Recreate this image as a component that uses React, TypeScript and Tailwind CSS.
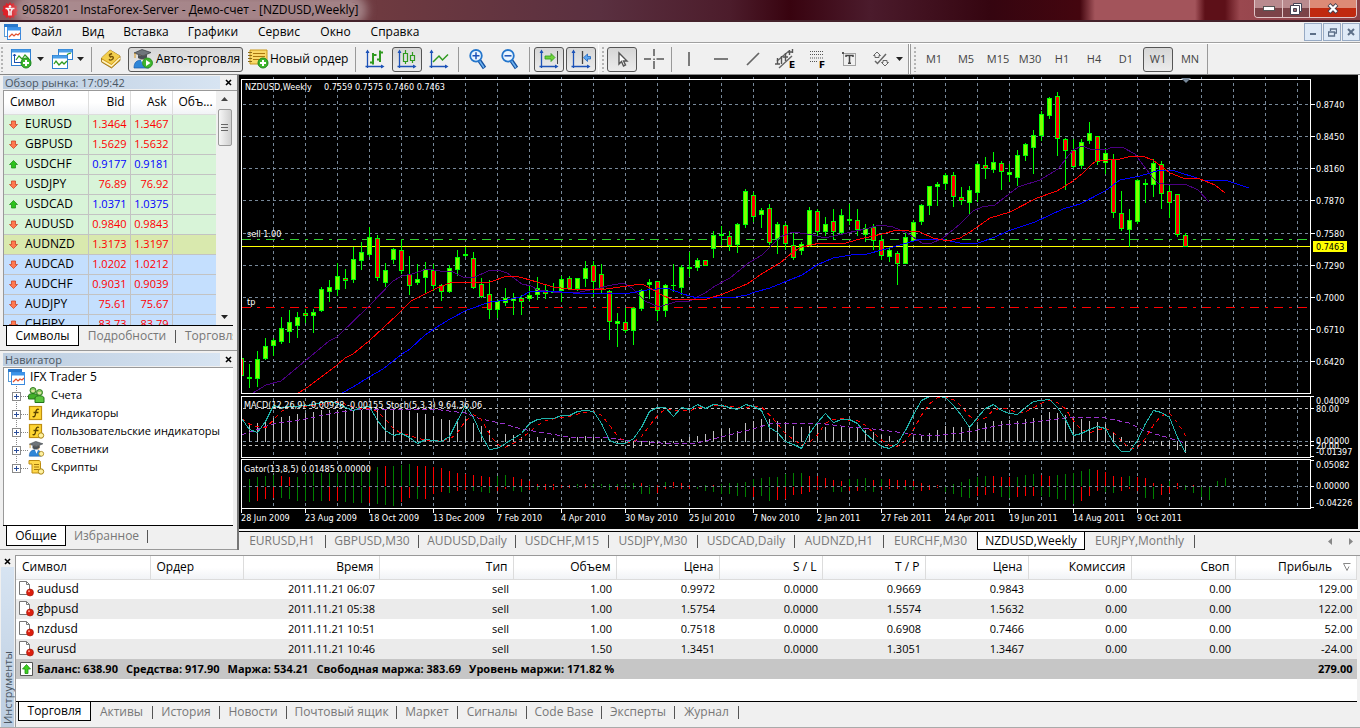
import type { ReactNode } from 'react';

/* ---------- chart data ---------- */

// [high, open/close top, open/close bottom, low, rising]
type Candle = [number, number, number, number, 0 | 1];

const CANDLES: Candle[] = [
  [358, 358, 376, 376, 0], [364, 377, 379, 388, 1], [351, 359, 379, 387, 1], [338, 346, 359, 360, 1], [338, 340, 346, 356, 1],
  [317, 328, 342, 344, 1], [310, 322, 332, 343, 1], [312, 317, 326, 338, 1], [309, 313, 316, 323, 0], [309, 312, 316, 333, 1],
  [287, 289, 311, 312, 1], [280, 287, 292, 302, 1], [263, 276, 290, 296, 1], [269, 278, 281, 289, 0], [247, 259, 280, 283, 1],
  [242, 252, 261, 270, 1], [227, 237, 255, 257, 1], [235, 238, 278, 281, 0], [263, 270, 283, 287, 1], [248, 249, 260, 264, 1],
  [240, 250, 271, 274, 0], [256, 274, 286, 295, 0], [264, 279, 283, 285, 1], [262, 269, 278, 293, 1], [264, 270, 286, 291, 0],
  [284, 285, 292, 301, 0], [265, 268, 292, 293, 1], [250, 257, 270, 276, 1], [247, 254, 256, 257, 1], [252, 258, 288, 289, 0],
  [278, 284, 297, 298, 0], [280, 294, 310, 319, 0], [300, 301, 310, 318, 1], [288, 298, 303, 306, 1], [293, 298, 301, 315, 1],
  [295, 298, 302, 315, 0], [286, 295, 299, 301, 1], [277, 288, 295, 300, 1], [285, 290, 294, 299, 0], [283, 291, 293, 293, 1],
  [276, 279, 291, 302, 1], [276, 278, 289, 290, 0], [278, 278, 289, 291, 1], [261, 268, 279, 287, 1], [261, 265, 282, 297, 0],
  [264, 274, 290, 293, 0], [290, 291, 322, 340, 0], [313, 321, 324, 347, 1], [308, 322, 331, 333, 0], [307, 308, 331, 345, 1],
  [289, 290, 309, 311, 1], [279, 282, 285, 299, 1], [281, 281, 311, 321, 0], [284, 285, 311, 317, 1], [264, 285, 286, 292, 1],
  [265, 267, 288, 295, 1], [252, 267, 269, 277, 1], [258, 260, 268, 271, 1], [260, 260, 266, 266, 0], [231, 235, 249, 258, 1],
  [226, 234, 236, 245, 1], [231, 236, 246, 251, 0], [223, 224, 245, 253, 1], [189, 191, 225, 228, 1], [192, 195, 217, 222, 0],
  [208, 210, 215, 228, 1], [204, 208, 243, 245, 0], [222, 224, 239, 254, 1], [223, 225, 244, 250, 0], [232, 245, 258, 260, 0],
  [242, 244, 251, 255, 1], [207, 210, 246, 247, 1], [209, 211, 232, 236, 0], [217, 224, 232, 236, 1], [209, 221, 232, 240, 0],
  [209, 215, 233, 235, 1], [204, 219, 221, 225, 1], [209, 220, 230, 236, 0], [224, 228, 235, 242, 1], [224, 227, 241, 250, 0],
  [235, 240, 256, 260, 0], [248, 250, 257, 262, 1], [251, 253, 264, 285, 0], [233, 237, 264, 264, 1], [220, 222, 241, 242, 1],
  [204, 205, 222, 225, 1], [186, 186, 206, 215, 1], [182, 184, 187, 206, 1], [173, 175, 184, 190, 1], [172, 175, 197, 207, 0],
  [187, 197, 201, 205, 0], [186, 190, 203, 214, 1], [163, 164, 193, 202, 1], [157, 165, 169, 179, 0], [152, 162, 170, 173, 1],
  [161, 163, 172, 190, 0], [164, 172, 175, 182, 1], [150, 155, 178, 186, 1], [143, 144, 156, 161, 1], [130, 135, 148, 174, 1],
  [111, 114, 136, 141, 1], [97, 98, 116, 119, 1], [92, 96, 139, 156, 0], [138, 139, 151, 190, 0], [139, 150, 167, 168, 0],
  [139, 142, 166, 169, 1], [122, 133, 141, 144, 1], [136, 136, 162, 165, 0], [148, 153, 163, 174, 1], [154, 159, 213, 218, 0],
  [191, 213, 229, 231, 0], [209, 220, 230, 247, 1], [179, 180, 222, 224, 1], [179, 183, 185, 203, 1], [159, 163, 185, 197, 1],
  [161, 164, 194, 209, 0], [186, 191, 203, 218, 0], [194, 194, 235, 237, 0], [233, 235, 247, 247, 0],
];

const MA_FAST =
  '253,393 266,385 281,381 305,361 329,341 337,337 369,306 393,281 402,276 412,274 427,269 440,271 453,272 463,277 475,277 488,271 498,270 507,273 522,284 531,286 538,290 553,292 580,292 600,288 607,286 623,283 632,288 645,301 659,307 675,302 690,301 705,293 715,286 730,278 747,264 762,255 780,237 793,232 800,233 813,235 825,238 847,233 865,229 880,225 893,227 907,233 922,243 930,244 943,238 960,224 973,211 982,207 995,205 1018,187 1040,180 1058,169 1073,150 1082,146 1090,149 1105,150 1113,147 1122,147 1135,154 1153,178 1158,183 1170,185 1185,184 1198,190 1209,202';
const MA_MID =
  '298,393 305,389 320,378 337,365 345,358 353,354 369,341 383,328 397,315 411,301 423,295 437,288 450,283 460,282 490,282 507,276 515,276 523,278 537,282 553,287 568,289 600,290 613,288 627,286 642,284 648,287 660,294 673,300 707,299 723,294 747,284 763,273 780,263 793,252 802,247 820,243 842,244 860,239 882,234 897,230 920,232 933,238 948,241 960,238 970,232 990,218 1010,212 1037,198 1057,191 1073,181 1083,173 1092,164 1097,161 1120,159 1132,156 1142,156 1153,160 1170,173 1183,178 1200,179 1215,185 1225,193';
const MA_SLOW =
  '342,393 353,387 369,377 383,369 402,354 410,349 425,335 437,327 450,319 467,310 490,302 507,300 520,297 531,291 550,291 573,293 600,294 630,293 647,290 667,288 683,294 697,298 713,297 730,298 747,295 755,292 770,288 787,281 802,275 817,265 833,258 857,254 867,254 882,250 900,245 917,240 940,239 960,243 978,243 995,237 1008,231 1035,222 1063,209 1080,204 1105,191 1120,180 1140,176 1160,170 1175,171 1203,180 1228,181 1249,188';

const STOCH = [
  418, 429, 432, 421, 405, 407, 406, 406, 405, 404, 402, 401, 403, 407, 410, 407, 406, 420, 430, 435, 433, 437, 443, 439, 440, 441, 436,
  420, 405, 417, 435, 449, 448, 443, 438, 433, 423, 419, 418, 418, 415, 415, 411, 410, 411, 423, 440, 443, 443, 438, 427, 411, 407, 407,
  416, 407, 409, 404, 408, 404, 405, 407, 409, 404, 406, 410, 427, 432, 441, 444, 448, 433, 422, 413, 422, 419, 419, 423, 433, 440, 446,
  448, 443, 430, 414, 400, 396, 396, 397, 405, 415, 427, 417, 408, 404, 410, 413, 414, 407, 401, 400, 399, 407, 419, 435, 433, 429, 426,
  428, 442, 451, 451, 440, 423, 410, 412, 417, 437, 452,
];

const MACD = [
  426, 424, 423, 421, 418, 417, 416, 414, 413, 412, 410, 410, 410, 410, 410, 410, 410, 410, 410, 410, 410, 411, 413, 414, 416, 419, 420,
  419, 419, 423, 426, 430, 440, 434, 435, 437, 438, 437, 438, 438, 438, 438, 437, 436, 437, 439, 440, 443, 442, 447, 445, 444, 443, 443,
  442, 439, 437, 436, 434, 431, 429, 428, 431, 423, 421, 419, 419, 421, 422, 426, 427, 426, 423, 427, 427, 427, 428, 428, 430, 432, 435,
  436, 440, 440, 437, 435, 433, 430, 426, 427, 427, 426, 425, 423, 421, 421, 420, 421, 419, 418, 415, 412, 413, 415, 419, 419, 421, 422,
  424, 432, 437, 442, 440, 442, 443, 444, 444, 449, 452,
];

const MACD_SIGNAL: [number, number][] = [
  [0, 435], [4, 424], [8, 419], [11, 414], [15, 409], [25, 410], [28, 413], [30, 419], [33, 424], [35, 429], [38, 433], [41, 437],
  [45, 437], [48, 440], [51, 442], [54, 444], [57, 443], [60, 437], [64, 429], [66, 424], [70, 423], [73, 424], [76, 427], [79, 429],
  [83, 433], [86, 436], [90, 433], [92, 430], [95, 425], [98, 423], [101, 420], [104, 417], [108, 418], [111, 423], [113, 431],
  [116, 438], [118, 443],
];

// Positive values are growing (green) bars, negative ones are shrinking (red).
const GATOR_UP = [
  0, 7, 9, 10, 11, -10, -9, 9, 12, 13, 13, 13, 13, 13, 13, 14, 16, 19, -20, 20, 21, 22, -20, -20, -19, -18, -15, -13, -12, -11, -10, -9,
  10, 11, -9, -7, -5, -2, -2, -2, -1, -1, 2, -2, 2, 2, 2, 2, 2, 3, -3, 1, -1, 4, -4, -3, -1, 0, 1, -1, 2, 3, 3, 4, 7, 8, 9, 9, 12, 13,
  13, -10, -10, -8, -6, -5, 7, 7, 8, -6, 7, -7, -6, -6, -5, -3, -1, -1, 0, 2, 4, 7, 9, 10, -10, -9, -9, 9, 11, 12, -11, -10, 11, 12, 13,
  15, 17, -16, -14, -10, -9, 10, -9, -8, -3, -2, 5, -3, 1, -1, 0, 0, 5, 8,
];
const GATOR_DOWN = [
  0, 15, -14, -12, -11, 11, 12, 14, 14, 14, 14, -14, -14, 15, 16, 16, -16, 17, 18, 19, -15, -11, 12, -12, -7, -5, 6, -4, -3, 4, 5, 6, -4,
  -2, 4, 5, -3, 3, -3, -3, -1, -1, 1, -1, 1, 1, 3, -3, 2, 2, 7, 7, -6, -2, -1, -2, -2, 2, 4, 5, 7, 7, 9, 10, -10, 9, 14, -13, -12, -8,
  -7, -5, -3, -1, 5, 5, -4, -4, 4, 5, -3, -2, -2, 3, 3, -4, -3, -1, 5, 7, 10, 11, -9, -8, -6, 10, 11, -10, -9, -9, 9, 10, 12, 13, 17,
  -14, -9, -4, 5, 6, -4, -2, -4, 11, 12, -8, -6, -2, 3, 6, 10, 13,
];

const PRICES: [string, number][] = [
  ['0.8740', 104], ['0.8450', 136], ['0.8160', 168], ['0.7870', 200], ['0.7580', 233], ['0.7290', 265], ['0.7000', 297], ['0.6710', 329],
  ['0.6420', 361],
];
const SUB_LABELS: [string, number][] = [
  ['0.04009', 400], ['80.00', 408], ['0.00000', 440], ['20.00', 445], ['-0.01397', 451], ['0.05082', 464], ['0.00000', 485],
  ['-0.04226', 502],
];
const DATES = [
  '28 Jun 2009', '23 Aug 2009', '18 Oct 2009', '13 Dec 2009', '7 Feb 2010', '4 Apr 2010', '30 May 2010', '25 Jul 2010', '7 Nov 2010',
  '2 Jan 2011', '27 Feb 2011', '24 Apr 2011', '19 Jun 2011', '14 Aug 2011', '9 Oct 2011',
];
const GRID_X = Array.from({ length: 33 }, (_, i) => 273 + i * 32);
const barX = (k: number) => 241 + k * 8;

const stochSignal = STOCH.map((_, k) => {
  const part = STOCH.slice(Math.max(0, k - 2), k + 1);
  return part.reduce((a, b) => a + b, 0) / part.length;
});
const path = (ys: number[]) => ys.map((y, k) => `${barX(k) + 0.5},${y + 0.5}`).join(' ');

function Chart() {
  return (
    <svg
      viewBox="239 75 1119 454"
      className="block h-full w-full bg-black"
      role="img"
      aria-label="NZDUSD,Weekly"
      fontFamily="'DejaVu Sans Condensed', 'DejaVu Sans', sans-serif"
      fontSize="9"
    >
      <defs>
        <clipPath id="plot"><rect x="242" y="75" width="1068" height="433" /></clipPath>
      </defs>
      <g shapeRendering="crispEdges" fill="none">
        <g stroke="#778899" strokeDasharray="3 3">
          {GRID_X.map((x) => (
            <g key={x}>
              <path d={`M${x + 0.5} 77V393`} />
              <path d={`M${x + 0.5} 398V457`} />
              <path d={`M${x + 0.5} 461V508`} />
            </g>
          ))}
          {PRICES.map(([p, y]) => <path key={p} d={`M243 ${y + 0.5}H1310`} />)}
          <path d="M243 441.5H1310M243 486.5H1310" />
        </g>
        <path d="M243 408.5H1310M243 445.5H1310" stroke="#c0c0c0" strokeDasharray="3 3" />
        <path d="M242 239.5H1310" stroke="#32cd32" strokeDasharray="9 6 3 6" />
        <path d="M242 307.5H1310" stroke="#ff0000" strokeDasharray="9 6 3 6" />
        <path d="M242 246.5H1310" stroke="#ffff00" />
        <g clipPath="url(#plot)">
          {CANDLES.map(([h, t, b, l, up], k) => (
            <g key={k}>
              <rect x={barX(k)} y={h} width="1" height={Math.max(1, l - h)} fill="#00ff00" />
              <rect x={barX(k) - 2} y={t} width="5" height={b - t} fill="#00ff00" />
              {b - t > 2 && <rect x={barX(k) - 1} y={t + 1} width="3" height={b - t - 2} fill={up ? '#7fff00' : '#ff0000'} />}
            </g>
          ))}
          <polyline points={MA_FAST} stroke="#4b0082" />
          <polyline points={MA_SLOW} stroke="#0000ff" />
          <polyline points={MA_MID} stroke="#ff0000" />
          {MACD.map((y, k) => (
            <rect key={k} x={barX(k)} y={Math.min(y, 441)} width="1" height={Math.abs(441 - y) + 1} fill="#c0c0c0" />
          ))}
          <polyline points={MACD_SIGNAL.map(([k, y]) => `${barX(k)},${y}`).join(' ')} stroke="#9932cc" strokeDasharray="5 3" />
          <polyline points={path(stochSignal)} stroke="#ff0000" strokeDasharray="4 4" />
          <polyline points={path(STOCH)} stroke="#20b2aa" />
          {GATOR_UP.map((v, k) => (
            <rect key={k} x={barX(k)} y={486 - Math.abs(v)} width="1" height={Math.abs(v)} fill={v > 0 ? '#008000' : '#ff0000'} />
          ))}
          {GATOR_DOWN.map((v, k) => (
            <rect key={k} x={barX(k)} y="487" width="1" height={Math.abs(v)} fill={v > 0 ? '#008000' : '#ff0000'} />
          ))}
        </g>
        <g stroke="#ffffff">
          <path d="M241.5 79.5H1310.5V393.5H241.5ZM241.5 396.5H1310.5V457.5H241.5ZM241.5 459.5H1310.5V508.5H241.5Z" />
          {PRICES.map(([p, y]) => <path key={p} d={`M1310 ${y + 0.5}h5`} />)}
          {DATES.map((d, i) => <path key={d} d={`M${241.5 + i * 64} 508v5`} />)}
          <path d="M1310 396.5h4M1310 408.5h4M1310 441.5h4M1310 445.5h4M1310 456.5h4M1310 460.5h4M1310 486.5h4M1310 507.5h4" />
        </g>
        <rect x="1313" y="241" width="34" height="11" fill="#ffff00" />
      </g>
      <path d="M1181 78h10l-5 5z" fill="#778899" />
      <g fill="#ffffff">
        <text x="245" y="90">NZDUSD,Weekly</text>
        <text x="324" y="90">0.7559 0.7575 0.7460 0.7463</text>
        <text x="247" y="237">sell 1.00</text>
        <text x="247" y="305">tp</text>
        <text x="244" y="408">MACD(12,26,9) -0.00928 -0.00155 Stoch(5,3,3) 9.64,36,06</text>
        <text x="244" y="472">Gator(13,8,5) 0.01485 0.00000</text>
        {PRICES.map(([p, y]) => <text key={p} x="1316" y={y + 4}>{p}</text>)}
        {SUB_LABELS.map(([p, y]) => <text key={p + y} x="1316" y={y + 4}>{p}</text>)}
        {DATES.map((d, i) => <text key={d} x={241 + i * 64} y="521">{d}</text>)}
      </g>
      <text x="1316" y="250" fill="#000000">0.7463</text>
    </svg>
  );
}

/* ---------- icons ---------- */

function Svg({ children, w = 20, h = 20 }: { children: ReactNode; w?: number; h?: number }) {
  return <svg width={w} height={h} viewBox={`0 0 ${w} ${h}`} fill="none" className="shrink-0 overflow-visible" aria-hidden="true">{children}</svg>;
}

const Plus = ({ x, y }: { x: number; y: number }) => (
  <g>
    <circle cx={x} cy={y} r="5" fill="#3db52c" stroke="#1e8a1a" />
    <path d={`M${x - 3} ${y}h6M${x} ${y - 3}v6`} stroke="#fff" strokeWidth="2" />
  </g>
);
const NewChartIcon = () => (
  <Svg w={22}>
    <rect x=".5" y=".5" width="19" height="16" fill="#fff" stroke="#2f7fd0" />
    <path d="M1 2h18" stroke="#4a9fe8" strokeWidth="3" />
    <path d="M3.500 14V5M2 7l1.500-2L5 7M3 13.500h8" stroke="#1c52b0" />
    <path d="M5 11l3-4 3 3 3-4 4 4" stroke="#2f9a1f" strokeWidth="1.200" />
    <Plus x={15} y={14} />
  </Svg>
);
const ProfilesIcon = () => (
  <Svg w={21}>
    <rect x="6.500" y=".5" width="14" height="10" fill="#fff" stroke="#2f7fd0" /><path d="M7 2h13" stroke="#4a9fe8" strokeWidth="3" />
    <path d="M13 9l3-4 3-1" stroke="#2f9a1f" strokeWidth="1.200" />
    <rect x=".5" y="6.500" width="15" height="13" fill="#fff" stroke="#2f7fd0" /><path d="M1 8h14" stroke="#4a9fe8" strokeWidth="3" />
    <path d="M2 15l2-3 3 4 3-3 2 2 3-3" stroke="#2f9a1f" strokeWidth="1.300" />
  </Svg>
);
const BookIcon = () => (
  <Svg>
    <path d="M.5 9L9 1l10 6v4.500L10.500 19 .5 13z" fill="#d19c17" stroke="#94690c" strokeWidth=".8" />
    <path d="M.5 9L9 1l10 6-8.500 8z" fill="#f3cf4e" />
    <path d="M1 11.500l9.500 5.500L19 9" stroke="#fff4c4" strokeWidth="1.500" />
    <path d="M8 6l3-1.500M8 6l1.500 2c2-1.500 4 .5 2 2.200s-3 .6-3.500 0" stroke="#7a5606" strokeWidth="1.400" />
  </Svg>
);
const Graduate = () => (
  <>
    <circle cx="10" cy="7.500" r="4" fill="#f1c48f" />
    <path d="M1 19c0-6 3-8 8-8s7 3 7 8z" fill="#2e86d8" stroke="#1a5cab" strokeWidth=".7" />
    <path d="M8 11l2 5 2-5z" fill="#fff" />
    <path d="M1 4l8-3.500 9 3-8 3.500z" fill="#6f757b" stroke="#33383d" strokeWidth=".7" />
    <path d="M5 6v3c2 1.500 7 1.500 9-.5V5.500L10 7z" fill="#4a5056" /><path d="M2 4v5" stroke="#d89a20" />
  </>
);
const AutoIcon = () => (
  <Svg><Graduate /><circle cx="14.500" cy="14" r="5" fill="#3db52c" stroke="#1e8a1a" strokeWidth=".8" /><path d="M13 11l4.500 3-4.500 3z" fill="#fff" /></Svg>
);
const OrderIcon = () => (
  <Svg w={21}>
    <path d="M2 1h17v14H2z" fill="#f9d968" stroke="#c9971b" /><path d="M5 4.500h12M5 7.500h12M5 10.500h9" stroke="#a9770e" />
    <path d="M0 3.500h4M0 6.500h4M0 9.500h4M0 12.500h4" stroke="#8d6c18" />
    <Plus x={15} y={14} />
  </Svg>
);
const Axes = ({ children }: { children?: ReactNode }) => (
  <Svg>
    <path d="M2.500 19V2M.5 17.500H18" stroke="#1c52b8" strokeWidth="1.300" />
    <path d="M.5 4l2-3.500L4.500 4zM16 15.500l3.500 2-3.500 2z" fill="#1c52b8" />
    {children}
  </Svg>
);
const BarsIcon = () => <Axes><path d="M8 4v11.500M5 13.500h3M8 6h3.500M15 1.500V13M12 10.500h3M15 3.500h3" stroke="#2f9a1f" strokeWidth="2" /></Axes>;
const CandlesIcon = () => <Axes><path d="M8.500 1v3M8.500 12v3M6.500 4.500h4v8h-4zM15.500 3v3M15.500 11v3M13.500 6.500h4v5h-4z" stroke="#2f9a1f" strokeWidth="1.200" /></Axes>;
const LineIcon = () => <Axes><path d="M4 13l6-6 3.500 4L19 5.500" stroke="#2f9a1f" strokeWidth="1.500" /></Axes>;
const MagIcon = ({ plus }: { plus?: boolean }) => (
  <Svg>
    <path d="M11 11l5.500 8" stroke="#16509f" strokeWidth="4" /><path d="M11.500 12l4.500 6.500" stroke="#6fb4f0" strokeWidth="1.500" />
    <circle cx="8" cy="6.800" r="5.800" fill="#eaf6ff" stroke="#2476cc" strokeWidth="1.800" />
    <path d={plus ? 'M4.500 6.800h7M8 3.300v7' : 'M4.500 6.800h7'} stroke="#1c52b8" strokeWidth="1.500" />
  </Svg>
);
const ScrollIcon = () => (
  <Axes><path d="M6 7h6V4.500L16 8.500l-4 4V10H6z" fill="#6fd33a" stroke="#2f9a1f" strokeWidth=".8" /><path d="M18.500 2v13" stroke="#444" /></Axes>
);
const ShiftIcon = () => (
  <Axes><path d="M11.500 2v13" stroke="#444" strokeWidth="1.300" /><path d="M19.500 7.500h-3V5l-4 3.700 4 3.800V10h3z" fill="#5da7f0" stroke="#1c62c0" strokeWidth=".8" /></Axes>
);
const CursorIcon = () => <Svg><path d="M7 4v11l2.500-2.500L11.500 17l2-1-2-4H15z" fill="#fff" stroke="#555" strokeWidth="1.400" /></Svg>;
const CrossIcon = () => <Svg><path d="M10 0v7M10 12v8M0 10h7M12.500 10H20" stroke="#555" strokeWidth="1.500" /><path d="M9.300 9.500h1.500v1.500H9.300z" fill="#555" /></Svg>;
const VIcon = () => <Svg><path d="M10 3v14" stroke="#555" strokeWidth="1.500" /></Svg>;
const HIcon = () => <Svg><path d="M3 10h14" stroke="#555" strokeWidth="1.500" /></Svg>;
const TrendIcon = () => <Svg><path d="M4 16L16 4" stroke="#666" strokeWidth="1.700" /></Svg>;
const ChannelIcon = () => (
  <Svg>
    <path d="M2 12L14 2M4 19L17 7" stroke="#666" strokeWidth="1.400" />
    <path d="M2.500 9v6M0 15h5M6.500 7v8M10.500 4v8M8 8h5M14.500 1v5M13 3h5M17.500 0v4" stroke="#555" strokeWidth="1.400" />
    <text x="14" y="19" fontSize="9" fontWeight="bold" fill="#000" fontFamily="DejaVu Sans, sans-serif">E</text>
  </Svg>
);
const FiboIcon = () => (
  <Svg>
    <path d="M3 2.500h14M3 5.500h14M3 9h14M3 12.500h7" stroke="#555" strokeDasharray="1 1" />
    <text x="12" y="19" fontSize="9" fontWeight="bold" fill="#000" fontFamily="DejaVu Sans, sans-serif">F</text>
  </Svg>
);
const TextIcon = () => (
  <Svg>
    <rect x="4.500" y="4.500" width="12" height="12" stroke="#555" strokeDasharray="1 1" /><path d="M3 3h2v2H3z" fill="#555" />
    <path d="M7 8V6.500h7V8M10.500 7v7M9 14.300h3" stroke="#444" strokeWidth="1.500" />
  </Svg>
);
const ArrowsIcon = () => (
  <Svg>
    <path d="M2.500 6.500l3.500-3.500 3.500 3.500H8v2H4v-2zM10.500 13.500l3.500 3.500 3.500-3.500H16v-2h-4v2z" stroke="#666" />
    <path d="M4 12l2.500 2.500L15 5" stroke="#666" strokeWidth="1.500" />
  </Svg>
);
const Caret = () => <svg width="7" height="4" viewBox="0 0 7 4" className="shrink-0" aria-hidden="true"><path d="M0 0h7L3.500 4z" fill="#222" /></svg>;
const ChartsLogo = () => (
  <Svg w={17} h={16}>
    <rect x=".5" y=".5" width="13" height="12" fill="#fff" stroke="#5a9bd5" /><path d="M0 1.500h14" stroke="#2878cc" strokeWidth="3" />
    <rect x="3.500" y="3.500" width="13" height="12" fill="#fff" stroke="#3b8ade" /><path d="M3 5h14" stroke="#3d94ea" strokeWidth="3" />
    <path d="M5 13l3-3 2 2 2-2 2 1 2-2" stroke="#e2502c" strokeWidth="1.200" />
  </Svg>
);
const AccountsIcon = () => (
  <Svg w={17} h={16}>
    <circle cx="5" cy="3.500" r="3" fill="#8fd06a" stroke="#2f7a1c" /><path d="M.5 12V8.500c0-2.500 9-2.500 9 0V12z" fill="#43b02a" stroke="#25751a" />
    <circle cx="11.500" cy="5.500" r="3" fill="#8fd06a" stroke="#2f7a1c" /><path d="M7 15.500V11c0-3 9-3 9 0v4.500z" fill="#5cc63e" stroke="#25751a" />
    <path d="M3.500 4h3M10 6h3" stroke="#f6e4b4" strokeWidth="1.600" />
  </Svg>
);
const FIcon = ({ custom }: { custom?: boolean }) => (
  <Svg w={17} h={16}>
    <rect x="1.500" y="1.500" width="12" height="13" fill="#ffd633" stroke="#c08f10" strokeWidth="1.200" />
    <path d="M11 4.500c-2-1-3 .5-3.300 3-.3 2.500-.7 5-3.200 4M5.500 7.500h5" stroke="#5b4300" strokeWidth="1.300" />
    {custom && <circle cx="13" cy="12.500" r="2.700" fill="#fff2a0" stroke="#a98416" />}
  </Svg>
);
const AdvisorIcon = () => (
  <svg width="17" height="16" viewBox="0 0 20 20" fill="none" className="shrink-0" aria-hidden="true">
    <Graduate /><circle cx="16" cy="16" r="3" fill="#fff2a0" stroke="#a98416" />
  </svg>
);
const ScriptIcon = () => (
  <Svg w={17} h={16}>
    <path d="M1 1.500h10c1 0 1.500 1 1.500 2V14H4V5H1z" fill="#ffd84a" stroke="#bd8c10" />
    <path d="M6 5.500h5M6 8h5M6 10.500h5" stroke="#a4780c" /><circle cx="13" cy="12.500" r="2.700" fill="#fff2a0" stroke="#a98416" />
  </Svg>
);
const DealIcon = () => (
  <Svg w={17} h={16}>
    <path d="M1.500 .5h7l3 3v10h-10z" fill="#fff" stroke="#777" /><path d="M8.500 .5v3h3" stroke="#777" />
    <circle cx="12" cy="11.500" r="3.500" fill="#dc1e0e" stroke="#9d1207" strokeWidth=".6" /><circle cx="11" cy="10.300" r="1" fill="#ff9a85" />
  </Svg>
);
const BalanceIcon = () => (
  <Svg w={14} h={15}>
    <path d="M.5 .5h12v13H.5z" fill="#fff" stroke="#555" /><path d="M6.500 2.500L10.500 7H8v4.500H5V7H2.500z" fill="#3ed01e" stroke="#1d8f12" strokeWidth=".8" />
  </Svg>
);
const TickArrow = ({ up }: { up: boolean }) => (
  <svg width="9" height="9" viewBox="0 0 9 9" aria-hidden="true">
    {up ? <path d="M4.500 .5l4 4h-2v3.500h-4V4.500h-2z" fill="#2cc21c" stroke="#148a10" strokeWidth=".7" />
      : <path d="M4.500 8.500l4-4h-2V1h-4v3.500h-2z" fill="#ff7a50" stroke="#c7381a" strokeWidth=".7" />}
  </svg>
);
const Logo = () => (
  <Svg w={16} h={17}>
    <path d="M8 0l1.500 2L12 1l.5 2.500 2.500.5-.5 2.500L16 8.500l-1.500 2 .5 2.500-2.500.5L12 16l-2.500-1L8 17l-1.500-2L4 16l-.5-2.500L1 13l.5-2.500L0 8.500l1.500-2L1 4l2.500-.5L4 1l2.500 1z" fill="#e01f26" />
    <path d="M3.500 6.500h9M5.500 6.500L7 9.500v4M10.500 6.500L9 9.500v4" stroke="#fff" strokeWidth="1.600" /><circle cx="8" cy="4.500" r="1.300" fill="#fff" />
  </Svg>
);
const CloseX = () => <svg width="7" height="7" viewBox="0 0 7 7" aria-hidden="true"><path d="M1 1l5 5M6 1L1 6" stroke="#000" strokeWidth="1.600" /></svg>;

/* ---------- toolbar ---------- */

function Tool({ label, active, children }: { label: string; active?: boolean; children: ReactNode }) {
  return (
    <button
      aria-label={label}
      className={
        active
          ? 'flex h-[25px] w-[30px] shrink-0 items-center justify-center rounded-[3px] border border-[#555] bg-linear-to-b from-[#d6d6d6] to-[#ececec] text-[#444]'
          : 'flex h-[25px] w-[30px] shrink-0 items-center justify-center text-[#444]'
      }
    >
      {children}
    </button>
  );
}
const Sep = () => <div className="mx-[2px] h-[25px] w-px shrink-0 bg-[#999]" />;
const Grip = () => <div className="mx-px h-[25px] w-[2px] shrink-0 bg-[repeating-linear-gradient(to_bottom,#b4b4b4_0_2px,transparent_2px_4px)]" />;

function Toolbar() {
  return (
    <div className="flex h-[31px] shrink-0 items-center gap-[2px] overflow-hidden border-t border-white bg-[#f0f0f0]">
      <Grip />
      <button aria-label="Новый график" className="ml-[5px] flex w-[34px] shrink-0 items-center gap-[4px]"><NewChartIcon /><Caret /></button>
      <button aria-label="Профили" className="ml-[5px] flex w-[35px] shrink-0 items-center gap-[4px]"><ProfilesIcon /><Caret /></button>
      <Sep />
      <Tool label="Обзор рынка"><BookIcon /></Tool>
      <button className="flex h-[25px] w-[115px] shrink-0 items-center gap-[3px] rounded-[3px] border border-[#555] bg-linear-to-b from-[#d6d6d6] to-[#ececec] pl-[4px] whitespace-nowrap"><AutoIcon />Авто-торговля</button>
      <button className="flex h-[25px] w-[106px] shrink-0 items-center gap-px pl-[3px] whitespace-nowrap"><OrderIcon />Новый ордер</button>
      <Sep />
      <Tool label="Бары"><BarsIcon /></Tool>
      <Tool label="Свечи" active><CandlesIcon /></Tool>
      <Tool label="Линия"><LineIcon /></Tool>
      <Sep />
      <Tool label="Увеличить"><MagIcon plus /></Tool>
      <Tool label="Уменьшить"><MagIcon /></Tool>
      <Sep />
      <Tool label="Автопрокрутка" active><ScrollIcon /></Tool>
      <Tool label="Сдвиг графика" active><ShiftIcon /></Tool>
      <div className="h-[31px] w-px shrink-0 bg-white" />
      <Grip />
      <Tool label="Курсор" active><CursorIcon /></Tool>
      <Tool label="Перекрестие"><CrossIcon /></Tool>
      <div className="h-[25px] w-px shrink-0 bg-[#999]" />
      <Tool label="Вертикальная линия"><VIcon /></Tool>
      <Tool label="Горизонтальная линия"><HIcon /></Tool>
      <Tool label="Трендовая линия"><TrendIcon /></Tool>
      <Tool label="Канал"><ChannelIcon /></Tool>
      <Tool label="Фибоначчи"><FiboIcon /></Tool>
      <Tool label="Текст"><TextIcon /></Tool>
      <button aria-label="Стрелки" className="flex w-[40px] shrink-0 items-center gap-[5px] pl-[5px]"><ArrowsIcon /><Caret /></button>
      <div className="h-[31px] w-[3px] shrink-0 border-x border-x-[#999] bg-white" />
      <Grip />
      {['M1', 'M5', 'M15', 'M30', 'H1', 'H4', 'D1', 'W1', 'MN'].map((t) => (
        <Tool key={t} label={t} active={t === 'W1'}><span className="text-[11px]">{t}</span></Tool>
      ))}
      <div className="h-[31px] w-px shrink-0 bg-[#999]" />
    </div>
  );
}

/* ---------- panels ---------- */

function PanelTitle({ children }: { children: ReactNode }) {
  return (
    <div className="flex h-[15px] shrink-0 items-center">
      <h2 className="h-[13px] flex-1 bg-linear-to-r from-[#bccde0] to-[#d7e4f2] pl-[2px] text-[11px] leading-[13px] text-[#4a5662]">{children}</h2>
      <button aria-label="Закрыть" className="flex w-[17px] justify-center"><CloseX /></button>
    </div>
  );
}

type Tick = [string, string, string, 0 | 1, string];
const TICKS: Tick[] = [
  ['EURUSD', '1.3464', '1.3467', 0, 'bg-[#d8f4d8]'],
  ['GBPUSD', '1.5629', '1.5632', 0, 'bg-[#d8f4d8]'],
  ['USDCHF', '0.9177', '0.9181', 1, 'bg-[#d8f4d8]'],
  ['USDJPY', '76.89', '76.92', 0, 'bg-[#d8f4d8]'],
  ['USDCAD', '1.0371', '1.0375', 1, 'bg-[#d8f4d8]'],
  ['AUDUSD', '0.9840', '0.9843', 0, 'bg-[#d8f4d8]'],
  ['AUDNZD', '1.3173', '1.3197', 0, 'bg-[#d9e9ae]'],
  ['AUDCAD', '1.0202', '1.0212', 0, 'bg-[#c4dffe]'],
  ['AUDCHF', '0.9031', '0.9039', 0, 'bg-[#c4dffe]'],
  ['AUDJPY', '75.61', '75.67', 0, 'bg-[#c4dffe]'],
  ['CHFJPY', '83.73', '83.79', 0, 'bg-[#c4dffe]'],
];

function MarketWatch() {
  return (
    <section className="flex min-h-0 flex-1 flex-col overflow-hidden pl-[3px]">
      <PanelTitle>Обзор рынка: 17:09:42</PanelTitle>
      <div className="flex min-h-0 flex-1 border-t border-l border-[#999] bg-white">
        <div className="min-w-0 flex-1 overflow-hidden">
          <table className="w-full table-fixed border-collapse">
            <colgroup><col className="w-[84px]" /><col className="w-[42px]" /><col className="w-[42px]" /><col /></colgroup>
            <thead>
              <tr className="h-[23px] bg-linear-to-b from-white from-50% to-[#f1f3f6]">
                <th className="border-r border-b border-[#ddd] pl-[6px] text-left font-normal">Символ</th>
                <th className="border-r border-b border-[#ddd] pr-[5px] text-right font-normal">Bid</th>
                <th className="border-r border-b border-[#ddd] pr-[5px] text-right font-normal">Ask</th>
                <th className="border-b border-[#ddd] pl-[6px] text-left font-normal">Объ...</th>
              </tr>
            </thead>
            <tbody>
              {TICKS.map(([s, bid, ask, up, bg]) => (
                <tr key={s} className={`h-[20px] ${bg}`}>
                  <td className="border-r border-b border-[#c3c3c3] p-0"><span className="flex items-center gap-[7px] pl-[5px] leading-[18px]"><TickArrow up={up === 1} />{s}</span></td>
                  <td className={`border-r border-b border-[#c3c3c3] pr-[3px] text-right text-[11px] leading-[18px] ${up ? 'text-[#0000ff]' : 'text-[#ff0000]'}`}>{bid}</td>
                  <td className={`border-r border-b border-[#c3c3c3] pr-[3px] text-right text-[11px] leading-[18px] ${up ? 'text-[#0000ff]' : 'text-[#ff0000]'}`}>{ask}</td>
                  <td className="border-b border-[#c3c3c3] p-0" />
                </tr>
              ))}
            </tbody>
          </table>
        </div>
        <div className="flex w-[17px] flex-col items-center bg-[#f0f0f0] py-[6px]">
          <svg width="7" height="4" viewBox="0 0 7 4" aria-hidden="true"><path d="M0 4h7L3.500 0z" fill="#444" /></svg>
          <div className="mt-[8px] flex h-[37px] w-[14px] items-center justify-center rounded-[2px] border border-[#999] bg-linear-to-r from-[#f6f6f6] to-[#cfcfcf]">
            <svg width="7" height="8" viewBox="0 0 7 8" aria-hidden="true"><path d="M0 .5h7M0 3.500h7M0 6.500h7" stroke="#666" /></svg>
          </div>
          <div className="flex-1" />
          <Caret />
        </div>
        <div className="w-[4px] bg-[#f0f0f0]" />
      </div>
      <div className="mr-[4px] flex h-[25px] shrink-0 overflow-hidden border-t border-black whitespace-nowrap">
        <button className="ml-[3px] h-[20px] w-[73px] shrink-0 border-x border-b border-black bg-white">Символы</button>
        <button className="h-[20px] w-[96px] shrink-0 text-[#777]">Подробности</button>
        <span className="mt-[4px] h-[13px] w-px shrink-0 bg-[#555]" />
        <button className="h-[20px] shrink-0 pl-[9px] text-[#777]">Торговля</button>
      </div>
    </section>
  );
}

const NAV: [string, ReactNode][] = [
  ['Счета', <AccountsIcon key="a" />],
  ['Индикаторы', <FIcon key="f" />],
  ['Пользовательские индикаторы', <FIcon key="c" custom />],
  ['Советники', <AdvisorIcon key="e" />],
  ['Скрипты', <ScriptIcon key="s" />],
];

function Navigator() {
  return (
    <section className="flex h-[200px] shrink-0 flex-col overflow-hidden border-y border-[#999] pt-px pl-[3px]">
      <PanelTitle>Навигатор</PanelTitle>
      <div className="mr-[4px] flex-1 border-t border-l border-[#999] bg-white text-[11px]">
        <div className="flex h-[18px] items-center gap-[5px] pl-[4px]"><ChartsLogo /><span className="text-[12px]">IFX Trader 5</span></div>
        <ul>
          {NAV.map(([name, icon], i) => (
            <li key={name} className="flex h-[18px] items-center pl-[8px] whitespace-nowrap">
              <svg width="16" height="18" viewBox="0 0 16 18" fill="none" className="shrink-0" shapeRendering="crispEdges" aria-hidden="true">
                <path d={i === NAV.length - 1 ? 'M4.500 0v5' : 'M4.500 0v18'} stroke="#888" strokeDasharray="1 1" />
                <path d="M9 10.500h7" stroke="#888" strokeDasharray="1 1" />
                <rect x=".5" y="6.500" width="8" height="8" fill="#fff" stroke="#8a8a8a" /><path d="M2 10.500h5M4.500 8v5" stroke="#2a4d9a" />
              </svg>
              {icon}
              <span className="pl-[6px]">{name}</span>
            </li>
          ))}
        </ul>
      </div>
      <div className="mr-[4px] flex h-[24px] shrink-0 border-t border-black">
        <button className="ml-[3px] h-[20px] w-[60px] border-x border-b border-black bg-white">Общие</button>
        <button className="h-[20px] w-[81px] text-[#777]">Избранное</button>
        <span className="mt-[4px] h-[13px] w-px bg-[#555]" />
      </div>
    </section>
  );
}

const CHART_TABS: [string, string][] = [
  ['EURUSD,H1', 'w-[87px]'], ['GBPUSD,M30', 'w-[93px]'], ['AUDUSD,Daily', 'w-[97px]'], ['USDCHF,M15', 'w-[93px]'], ['USDJPY,M30', 'w-[89px]'],
  ['USDCAD,Daily', 'w-[97px]'], ['AUDNZD,H1', 'w-[89px]'], ['EURCHF,M30', 'w-[93px]'], ['NZDUSD,Weekly', 'w-[108px]'], ['EURJPY,Monthly', 'w-[110px]'],
];

function ChartTabs() {
  return (
    <div className="flex h-[19px] shrink-0 overflow-hidden border-t border-black whitespace-nowrap">
      {CHART_TABS.map(([t, w]) =>
        t === 'NZDUSD,Weekly' ? (
          <button key={t} className={`h-[18px] shrink-0 border-x border-b border-black bg-white leading-[17px] ${w}`}>{t}</button>
        ) : (
          <div key={t} className={`flex h-[18px] shrink-0 items-center text-[#777] ${w}`}>
            <button className="flex-1">{t}</button>
            {t !== 'EURCHF,M30' && <span className="h-[13px] w-px bg-[#555]" />}
          </div>
        ),
      )}
      <div className="flex flex-1 items-center justify-end gap-[17px] pr-[7px]">
        <svg width="4" height="7" viewBox="0 0 4 7" aria-hidden="true"><path d="M4 0v7L0 3.500z" fill="#888" /></svg>
        <svg width="4" height="7" viewBox="0 0 4 7" aria-hidden="true"><path d="M0 0v7l4-3.500z" fill="#888" /></svg>
      </div>
    </div>
  );
}

/* ---------- toolbox ---------- */

const COLS: [string, string][] = [
  ['Символ', 'w-[134px]'], ['Ордер', 'w-[93px]'], ['Время', 'w-[136px]'], ['Тип', 'w-[134px]'], ['Объем', 'w-[103px]'], ['Цена', 'w-[103px]'],
  ['S / L', 'w-[103px]'], ['T / P', 'w-[103px]'], ['Цена', 'w-[103px]'], ['Комиссия', 'w-[103px]'], ['Своп', 'w-[104px]'], ['Прибыль', ''],
];
const DEALS = [
  ['audusd', '', '2011.11.21 06:07', 'sell', '1.00', '0.9972', '0.0000', '0.9669', '0.9843', '0.00', '0.00', '129.00'],
  ['gbpusd', '', '2011.11.21 05:38', 'sell', '1.00', '1.5754', '0.0000', '1.5574', '1.5632', '0.00', '0.00', '122.00'],
  ['nzdusd', '', '2011.11.21 10:51', 'sell', '1.00', '0.7518', '0.0000', '0.6908', '0.7466', '0.00', '0.00', '52.00'],
  ['eurusd', '', '2011.11.21 10:46', 'sell', '1.50', '1.3451', '0.0000', '1.3051', '1.3467', '0.00', '0.00', '-24.00'],
];
const SUMMARY = ['Баланс: 638.90', 'Средства: 917.90', 'Маржа: 534.21', 'Свободная маржа: 383.69', 'Уровень маржи: 171.82 %'];
const BOX_TABS: [string, string][] = [
  ['Активы', 'w-[62px]'], ['История', 'w-[67px]'], ['Новости', 'w-[67px]'], ['Почтовый ящик', 'w-[110px]'], ['Маркет', 'w-[61px]'],
  ['Сигналы', 'w-[69px]'], ['Code Base', 'w-[75px]'], ['Эксперты', 'w-[73px]'], ['Журнал', 'w-[64px]'],
];

function Toolbox() {
  return (
    <section className="flex h-[178px] shrink-0 border-b border-[#aaa] pt-[5px]">
      <div className="flex w-[15px] shrink-0 flex-col items-center">
        <button aria-label="Закрыть" className="flex h-[12px] items-center"><CloseX /></button>
        <h2 className="min-h-0 w-[13px] flex-1 rotate-180 bg-linear-to-b from-[#bccde0] to-[#d7e4f2] pt-[3px] text-[11px] leading-[13px] text-[#4a5662] [writing-mode:vertical-rl]">Инструменты</h2>
      </div>
      <div className="flex min-w-0 flex-1 flex-col border-t border-l border-[#999] pr-[3px]">
        <div className="min-h-0 flex-1 bg-white">
          <table className="w-full table-fixed border-collapse text-right">
            <colgroup>{COLS.map(([, w], i) => <col key={i} className={w} />)}</colgroup>
            <thead>
              <tr className="h-[23px] bg-linear-to-b from-white from-50% to-[#f1f3f6]">
                {COLS.map(([c], i) => (
                  <th key={i} className={i < 2 ? 'border-r border-b border-[#dcdcdc] pl-[6px] text-left font-normal' : 'border-r border-b border-[#dcdcdc] pr-[5px] font-normal'}>
                    {i === 11 ? (
                      <span className="flex items-center justify-end gap-[11px]">{c}<svg width="8" height="8" viewBox="0 0 8 8" fill="none" aria-hidden="true"><path d="M7.500 .5h-7l3.500 7 2-4" stroke="#888" /></svg></span>
                    ) : c}
                  </th>
                ))}
              </tr>
            </thead>
            <tbody>
              {DEALS.map((row) => (
                <tr key={row[0]} className="h-[20px] even:bg-[#ebebeb]">
                  {row.map((c, i) =>
                    i === 0 ? (
                      <td key={i} className="p-0"><span className="flex items-center gap-[2px] pl-[2px] leading-[18px]"><DealIcon />{c}</span></td>
                    ) : (
                      <td key={i} className="pr-[4px] text-[11px] leading-[18px]">{c}</td>
                    ),
                  )}
                </tr>
              ))}
              <tr className="h-[20px] bg-[#c6c6c6] font-bold">
                <td colSpan={11} className="p-0 text-left text-[11px] leading-[18px]">
                  <span className="flex items-center gap-[8px] pl-[4px] whitespace-nowrap"><span className="-mr-[5px]"><BalanceIcon /></span>{SUMMARY.map((s) => <span key={s}>{s}</span>)}</span>
                </td>
                <td className="pr-[4px] text-[11px] leading-[18px]">279.00</td>
              </tr>
            </tbody>
          </table>
        </div>
        <div className="flex h-[26px] shrink-0 border-t border-black whitespace-nowrap">
          <button className="ml-[2px] h-[19px] w-[73px] shrink-0 border-x border-b border-black bg-white">Торговля</button>
          {BOX_TABS.map(([t, w]) => (
            <div key={t} className={`flex h-[20px] shrink-0 items-center text-[#777] ${w}`}>
              <button className="flex-1">{t}</button>
              <span className="h-[13px] w-px bg-[#555]" />
            </div>
          ))}
        </div>
      </div>
    </section>
  );
}

/* ---------- window ---------- */

const MENU: [string, string][] = [
  ['Файл', 'w-[51px]'], ['Вид', 'w-[42px]'], ['Вставка', 'w-[64px]'], ['Графики', 'w-[70px]'], ['Сервис', 'w-[62px]'], ['Окно', 'w-[51px]'], ['Справка', 'w-[68px]'],
];
const mdi = 'flex h-[18px] w-[18px] items-center justify-center border border-[#97aac4] bg-[#dfeaf7]';

export default function App() {
  return (
    <div className="flex h-screen min-h-[728px] flex-col overflow-hidden bg-[#f0f0f0] font-['Open_Sans','Noto_Sans',sans-serif] text-[12px] leading-[16px] text-black">
      <header className="flex h-[22px] shrink-0 items-start overflow-hidden border-b-2 border-[#45222b] bg-[linear-gradient(to_right,#84555a_0px,#6e3a40_380px,#5a3040_600px,#4c1c2b_730px,#38030f_790px,#4b1b2c_870px,#350510_990px,#44060f_1080px,#a3545b_1095px,#a3545b_1195px,#5d1018_1205px,#5d1018_1225px,#9a484f_1240px,#8a4046_1360px)]">
        <div className="flex h-[20px] items-center gap-[4px] pl-[2px]">
          <Logo />
          <h1 className="rounded-[8px] bg-[#c4b0b4]/60 shadow-[0_0_10px_8px_rgba(196,176,180,0.6)]">9058201 - InstaForex-Server - Демо-счет - [NZDUSD,Weekly]</h1>
        </div>
        <div className="mr-[3px] ml-auto flex h-[18px] overflow-hidden rounded-b-[4px] border border-t-0 border-[#e0c4c6]">
          <button aria-label="Свернуть" className="flex w-[28px] items-center justify-center border-r border-[#e0c4c6] bg-linear-to-b from-[#b98a8e] from-50% to-[#7b4348] to-50%">
            <svg width="12" height="5" viewBox="0 0 12 5" aria-hidden="true"><rect x=".5" y=".5" width="11" height="4" fill="#fff" stroke="#555" /></svg>
          </button>
          <button aria-label="Восстановить" className="flex w-[27px] items-center justify-center border-r border-[#e0c4c6] bg-linear-to-b from-[#b98a8e] from-50% to-[#7b4348] to-50%">
            <svg width="12" height="12" viewBox="0 0 12 12" aria-hidden="true"><path d="M3.500 .5h8v8h-8z" stroke="#445" fill="#fff" /><path d="M.5 2.500h9v9h-9z" stroke="#445" fill="#fff" /><path d="M3.500 5.500h3v3h-3z" stroke="#445" fill="#96686d" /></svg>
          </button>
          <button aria-label="Закрыть окно" className="flex w-[46px] items-center justify-center bg-linear-to-b from-[#dd8a76] from-50% to-[#c0290f] to-50%">
            <svg width="12" height="11" viewBox="0 0 12 11" aria-hidden="true"><path d="M2 1.500l8 8M10 1.500l-8 8" stroke="#454050" strokeWidth="4" /><path d="M2.500 2l7 7M9.500 2l-7 7" stroke="#fff" strokeWidth="2.400" /></svg>
          </button>
        </div>
      </header>
      <nav className="flex h-[21px] shrink-0 items-center border-b border-[#a0a0a0] pl-[4px]">
        <ChartsLogo />
        {MENU.map(([m, w]) => <button key={m} className={`shrink-0 text-center ${w}`}>{m}</button>)}
        <div className="ml-auto flex gap-px">
          <button aria-label="Свернуть график" className={mdi}><svg width="8" height="8" viewBox="0 0 8 8" aria-hidden="true"><path d="M1 6h6" stroke="#5c6f88" strokeWidth="2" /></svg></button>
          <button aria-label="Восстановить график" className={mdi}><svg width="9" height="9" viewBox="0 0 9 9" fill="none" aria-hidden="true"><path d="M2.500 3V1h6v4h-2M.5 4h6v4h-6z" stroke="#5c6f88" strokeWidth="1.300" /></svg></button>
          <button aria-label="Закрыть график" className={mdi}><svg width="8" height="8" viewBox="0 0 8 8" aria-hidden="true"><path d="M1 1l6 6M7 1L1 7" stroke="#5c6f88" strokeWidth="2" /></svg></button>
        </div>
      </nav>
      <Toolbar />
      <main className="flex min-h-0 flex-1 border-t border-[#888]">
        <div className="flex w-[237px] shrink-0 flex-col">
          <MarketWatch />
          <Navigator />
        </div>
        <div className="flex min-w-0 flex-1 flex-col border-l-2 border-[#777]">
          <div className="min-h-0 flex-1 border-r-2 border-b-2 border-[#f4f4f4] bg-black"><Chart /></div>
          <ChartTabs />
        </div>
      </main>
      <Toolbox />
    </div>
  );
}
